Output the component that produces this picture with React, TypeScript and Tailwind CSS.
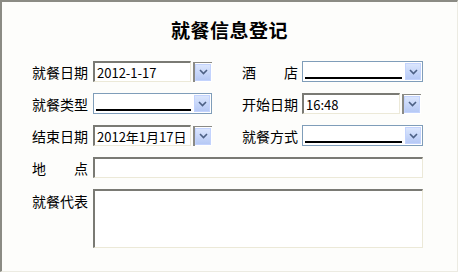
import React from 'react';

const cjk = { fontFamily: '"Noto Sans CJK SC", "Noto Sans", sans-serif' };

function Chevron() {
  return (
    <svg width="9" height="6" viewBox="0 0 9 6">
      <path d="M1 1 L4.5 4.5 L8 1" fill="none" stroke="#4d6185" strokeWidth="1.6" />
    </svg>
  );
}

function ArrowButton({ className = '' }: { className?: string }) {
  return (
    <div
      className={`flex items-center justify-center bg-gradient-to-b from-[#dbe6fd] to-[#b6c9f5] border border-[#c3d3fd] ${className}`}
    >
      <Chevron />
    </div>
  );
}

// text box + separate dropdown button (date / time pickers)
function PickerField({ value, width }: { value: string; width: number }) {
  return (
    <div className="flex items-center">
      <div
        className="h-[21px] flex items-center pl-[2px] overflow-hidden whitespace-nowrap bg-white border-t-2 border-l-2 border-t-[#7a7a74] border-l-[#7a7a74] border-r border-b border-r-[#ece9d8] border-b-[#ece9d8] text-[13px] leading-none text-black"
        style={{ width }}
      >
        {value}
      </div>
      <div className="ml-[2px] h-[20px] w-[19px] flex border-l-2 border-t border-[#8a8a85] bg-white">
        <ArrowButton className="w-[16px] h-[17px] mt-[1px]" />
      </div>
    </div>
  );
}

// plain dropdown with empty selection
function DropField({ width }: { width: number }) {
  return (
    <div
      className="h-[21px] flex items-center bg-white border border-[#7f9db9] pl-[2px] pr-[1px]"
      style={{ width }}
    >
      <div className="flex-1 h-full flex items-end pb-[2px] pr-[3px]">
        <div className="w-full h-[2px] bg-black" />
      </div>
      <ArrowButton className="w-[16px] h-[17px]" />
    </div>
  );
}

function Label({ text, spread = false }: { text: string; spread?: boolean }) {
  if (spread) {
    const [a, b] = text.split('');
    return (
      <div className="w-[56px] flex justify-between text-[14px] leading-none text-black">
        <span>{a}</span>
        <span>{b}</span>
      </div>
    );
  }
  return <div className="w-[56px] text-[14px] leading-none text-black whitespace-nowrap">{text}</div>;
}

export default function App() {
  return (
    <div
      className="w-[458px] h-[272px] bg-[#fdfdfb] border-t-2 border-l-2 border-t-[#8b8b84] border-l-[#8b8b84] border-r border-b border-r-[#ecebe2] border-b-[#ecebe2]"
      style={cjk}
    >
      <div className="pt-[15px] text-center text-[19px] font-bold leading-[26px] text-black tracking-[0.5px]">
        就餐信息登记
      </div>

      <div className="mt-[18px] flex flex-col gap-[11px] pl-[30px]">
        <div className="flex items-center h-[21px]">
          <Label text="就餐日期" />
          <div className="ml-[5px] w-[119px]">
            <PickerField value="2012-1-17" width={98} />
          </div>
          <div className="ml-[30px]">
            <Label text="酒店" spread />
          </div>
          <div className="ml-[4px]">
            <DropField width={121} />
          </div>
        </div>

        <div className="flex items-center h-[21px]">
          <Label text="就餐类型" />
          <div className="ml-[5px] w-[119px]">
            <DropField width={119} />
          </div>
          <div className="ml-[30px]">
            <Label text="开始日期" />
          </div>
          <div className="ml-[4px]">
            <PickerField value="16:48" width={98} />
          </div>
        </div>

        <div className="flex items-center h-[21px]">
          <Label text="结束日期" />
          <div className="ml-[5px] w-[119px]">
            <PickerField value="2012年1月17日" width={98} />
          </div>
          <div className="ml-[30px]">
            <Label text="就餐方式" />
          </div>
          <div className="ml-[4px]">
            <DropField width={121} />
          </div>
        </div>

        <div className="flex items-center h-[21px]">
          <Label text="地点" spread />
          <div className="ml-[5px] w-[330px] h-[21px] bg-white border-t-2 border-l-2 border-t-[#7a7a74] border-l-[#7a7a74] border-r border-b border-r-[#ece9d8] border-b-[#ece9d8]" />
        </div>

        <div className="flex items-start h-[59px]">
          <div className="pt-[5px]">
            <Label text="就餐代表" />
          </div>
          <div className="ml-[5px] w-[330px] h-[59px] bg-white border-t-2 border-l-2 border-t-[#7a7a74] border-l-[#7a7a74] border-r border-b border-r-[#ece9d8] border-b-[#ece9d8]" />
        </div>
      </div>
    </div>
  );
}
